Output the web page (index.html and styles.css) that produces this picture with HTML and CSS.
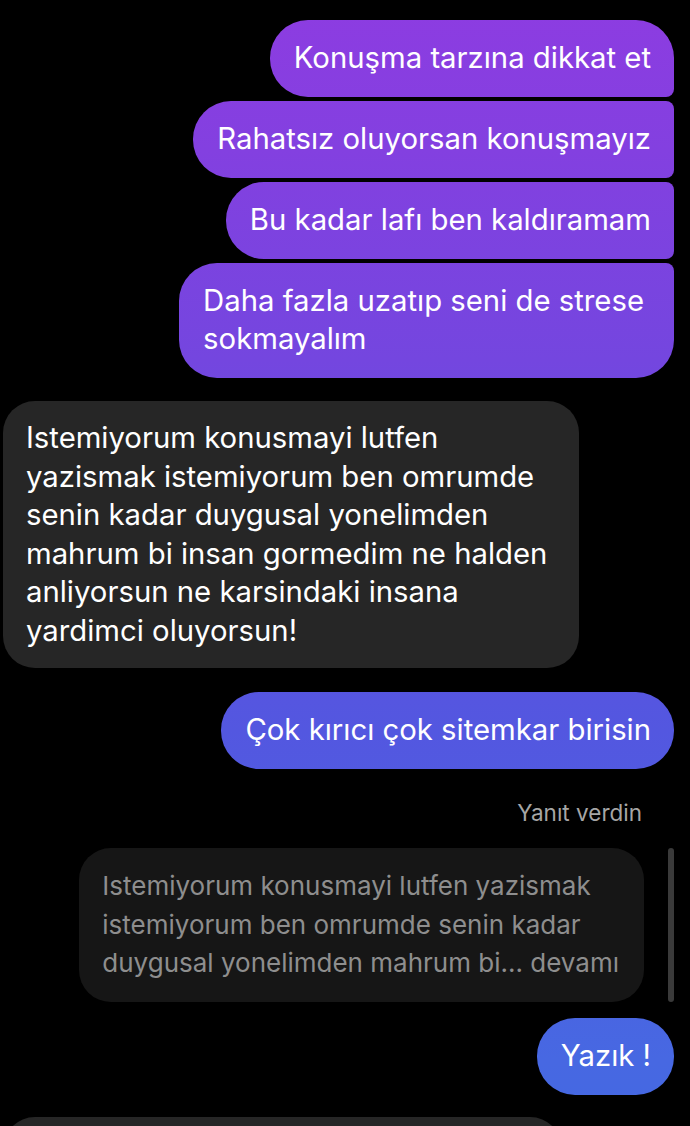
FILE: index.html
```html
<!DOCTYPE html>
<html lang="tr">
<head>
<meta charset="utf-8">
<title>Sohbet</title>
<link rel="stylesheet" href="styles.css">
</head>
<body>
<main class="thread">
  <div class="group out">
    <div class="bubble sent first">Konuşma tarzına dikkat et</div>
    <div class="bubble sent mid">Rahatsız oluyorsan konuşmayız</div>
    <div class="bubble sent mid">Bu kadar lafı ben kaldıramam</div>
    <div class="bubble sent last">Daha fazla uzatıp seni de strese<br>sokmayalım</div>
  </div>

  <div class="bubble recv">Istemiyorum konusmayi lutfen<br>yazismak istemiyorum ben omrumde<br>senin kadar duygusal yonelimden<br>mahrum bi insan gormedim ne halden<br>anliyorsun ne karsindaki insana<br>yardimci oluyorsun!</div>

  <div class="bubble sent single cok">Çok kırıcı çok sitemkar birisin</div>

  <div class="reply-label">Yanıt verdin</div>
  <div class="reply-row">
    <div class="reply-quote">Istemiyorum konusmayi lutfen yazismak<br>istemiyorum ben omrumde senin kadar<br>duygusal yonelimden mahrum bi... devamı</div>
    <div class="reply-bar"></div>
  </div>
  <div class="bubble sent single yazik">Yazık !</div>

  <div class="bubble recv tail"></div>
</main>
</body>
</html>
```

FILE: styles.css
```css
html, body {
  margin: 0;
  padding: 0;
  background: #000;
}
body {
  font-family: Inter, "Noto Sans", "Liberation Sans", sans-serif;
  color: #fff;
  overflow: hidden;
  height: 1126px;
}
.thread {
  display: flex;
  flex-direction: column;
  padding: 20px 16px 0 3px;
}
.group {
  display: flex;
  flex-direction: column;
  gap: 4px;
}
.out {
  align-items: flex-end;
}
.bubble {
  font-size: 29.3px;
  line-height: 38px;
  padding: 19px 23px 20px 24px;
}
.sent {
  align-self: flex-end;
  background: linear-gradient(180deg, #8d3ce1 0px, #8340e0 150px, #7446df 360px, #5f50e0 560px, #5357e0 730px, #4768e2 1060px, #4468e2 1126px);
  background-attachment: fixed;
  border-radius: 38px;
}
.first { border-bottom-right-radius: 8px; }
.mid { border-top-right-radius: 8px; border-bottom-right-radius: 8px; }
.last { border-top-right-radius: 8px; padding-right: 30px; }
.recv {
  align-self: flex-start;
  background: #262626;
  border-radius: 32px;
  margin-top: 23px;
  line-height: 38.5px;
  padding: 18px 32px 18px 23px;
}
.cok {
  margin-top: 24px;
}
.reply-label {
  align-self: flex-end;
  margin: 31px 32px 0 0;
  font-size: 22.5px;
  line-height: 26px;
  color: #a6a6a6;
}
.reply-row {
  display: flex;
  justify-content: flex-end;
  align-items: stretch;
  gap: 24px;
  margin-top: 22px;
}
.reply-quote {
  background: #161616;
  color: #8e8e8e;
  border-radius: 32px;
  font-size: 26px;
  line-height: 38.5px;
  padding: 19px 25px 19px 23px;
}
.reply-bar {
  width: 6px;
  background: #3a3a3a;
  border-radius: 3px;
}
.yazik {
  margin-top: 16px;
}
.tail {
  margin-top: 22px;
  width: 559px;
  height: 90px;
  padding: 0;
  box-sizing: border-box;
}
```
